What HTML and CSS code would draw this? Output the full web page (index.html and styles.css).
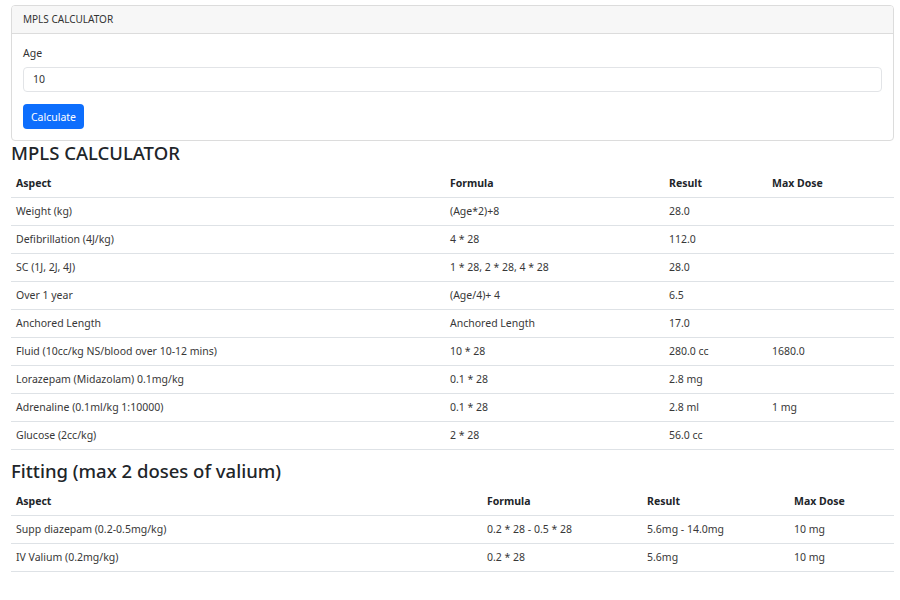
FILE: index.html
```html
<!DOCTYPE html>
<html>
<head>
<meta charset="utf-8">
<link rel="stylesheet" href="styles.css">
</head>
<body>
<div class="page">
  <div class="card">
    <div class="card-header">MPLS CALCULATOR</div>
    <div class="card-body">
      <label class="label">Age</label>
      <div class="input">10</div>
      <button class="btn">Calculate</button>
    </div>
  </div>

  <h2 class="title">MPLS CALCULATOR</h2>
  <table class="tbl t1">
    <thead>
      <tr><th>Aspect</th><th>Formula</th><th>Result</th><th>Max Dose</th></tr>
    </thead>
    <tbody>
      <tr><td>Weight (kg)</td><td>(Age*2)+8</td><td>28.0</td><td></td></tr>
      <tr><td>Defibrillation (4J/kg)</td><td>4 * 28</td><td>112.0</td><td></td></tr>
      <tr><td>SC (1J, 2J, 4J)</td><td>1 * 28, 2 * 28, 4 * 28</td><td>28.0</td><td></td></tr>
      <tr><td>Over 1 year</td><td>(Age/4)+ 4</td><td>6.5</td><td></td></tr>
      <tr><td>Anchored Length</td><td>Anchored Length</td><td>17.0</td><td></td></tr>
      <tr><td>Fluid (10cc/kg NS/blood over 10-12 mins)</td><td>10 * 28</td><td>280.0 cc</td><td>1680.0</td></tr>
      <tr><td>Lorazepam (Midazolam) 0.1mg/kg</td><td>0.1 * 28</td><td>2.8 mg</td><td></td></tr>
      <tr><td>Adrenaline (0.1ml/kg 1:10000)</td><td>0.1 * 28</td><td>2.8 ml</td><td>1 mg</td></tr>
      <tr><td>Glucose (2cc/kg)</td><td>2 * 28</td><td>56.0 cc</td><td></td></tr>
    </tbody>
  </table>

  <h2 class="title">Fitting (max 2 doses of valium)</h2>
  <table class="tbl t2">
    <thead>
      <tr><th>Aspect</th><th>Formula</th><th>Result</th><th>Max Dose</th></tr>
    </thead>
    <tbody>
      <tr><td>Supp diazepam (0.2-0.5mg/kg)</td><td>0.2 * 28 - 0.5 * 28</td><td>5.6mg - 14.0mg</td><td>10 mg</td></tr>
      <tr><td>IV Valium (0.2mg/kg)</td><td>0.2 * 28</td><td>5.6mg</td><td>10 mg</td></tr>
    </tbody>
  </table>
</div>
</body>
</html>
```

FILE: styles.css
```css
html, body {
  margin: 0;
  padding: 0;
  background: #fff;
}
body {
  font-family: "Noto Sans", "Open Sans", sans-serif;
  font-size: 10.5px;
  line-height: 1.5;
  color: #212529;
}
.page {
  padding: 5px 6px 0 11px;
}
.card {
  border: 1px solid #dcdcdc;
  border-radius: 4px;
  overflow: hidden;
}
.card-header {
  background: #f7f7f7;
  border-bottom: 1px solid #dcdcdc;
  height: 27px;
  line-height: 27px;
  padding: 0 11px;
  font-size: 10px;
  color: #333;
}
.card-body {
  padding: 11px 11px 11px 11px;
  display: flex;
  flex-direction: column;
  align-items: flex-start;
}
.label {
  height: 16px;
  line-height: 16px;
  margin-bottom: 6px;
  color: #333;
}
.input {
  align-self: stretch;
  height: 23px;
  line-height: 23px;
  border: 1px solid #e2e4e7;
  border-radius: 4px;
  padding: 0 9px;
  margin-bottom: 12px;
  color: #333;
}
.btn {
  height: 25px;
  width: 61px;
  border: none;
  border-radius: 4px;
  background: #0d6efd;
  color: #fff;
  font-family: inherit;
  font-size: 10.5px;
  padding: 0;
}
.title {
  font-size: 18.5px;
  font-weight: 500;
  line-height: 24px;
  margin: 0 0 5px 0;
  color: #212529;
}
.tbl {
  width: 100%;
  border-collapse: collapse;
  margin-bottom: 9px;
}
.tbl th, .tbl td {
  text-align: left;
  padding: 6px 5px;
  height: 15px;
  line-height: 15px;
  border-bottom: 1px solid #dee2e6;
  vertical-align: top;
}
.tbl th {
  font-weight: 700;
}
.tbl td {
  font-weight: 400;
  color: #383838;
}
.t1 th:nth-child(1) { width: 424px; }
.t1 th:nth-child(2) { width: 209px; }
.t1 th:nth-child(3) { width: 93px; }
.t2 th:nth-child(1) { width: 461px; }
.t2 th:nth-child(2) { width: 150px; }
.t2 th:nth-child(3) { width: 137px; }
```
